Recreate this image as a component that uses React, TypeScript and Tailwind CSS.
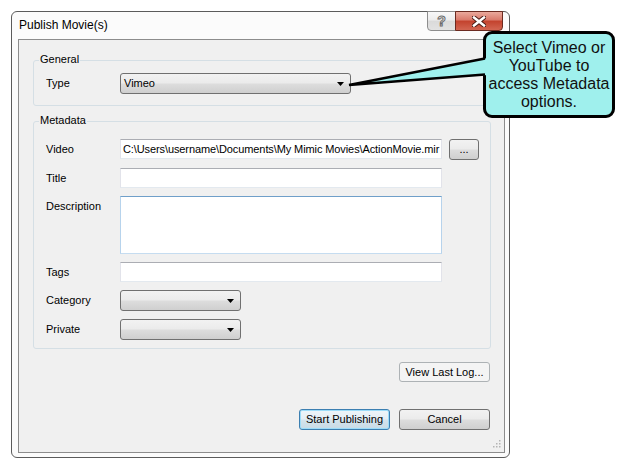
import React from 'react';

const font = { fontFamily: '"Liberation Sans", Arial, sans-serif' };

const textBox =
  'h-[20px] w-[322px] bg-white border border-t-[#abadb3] border-x-[#e2e3ea] border-b-[#e3e9ef]';

const winBtn =
  'flex items-center justify-center rounded-[3px] border text-[11px] text-black';

function Arrow() {
  return (
    <svg width="7" height="4" viewBox="0 0 7 4" className="shrink-0">
      <polygon points="0,0 7,0 3.5,4" fill="#000" />
    </svg>
  );
}

function Combo({ width, value }: { width: string; value?: string }) {
  return (
    <div
      className={`flex h-[21px] items-center rounded-[3px] border border-[#707070] bg-[linear-gradient(#f2f2f2,#ebebeb_48%,#dddddd_52%,#cfcfcf)] pl-[3px] pr-[6px] ${width}`}
    >
      <span className="text-[11px] leading-none text-black">{value}</span>
      <span className="ml-auto">
        <Arrow />
      </span>
    </div>
  );
}

function Row({ label, children }: { label: string; children: React.ReactNode }) {
  return (
    <div className="flex items-start">
      <div className="h-[20px] w-[86px] pl-[12px] text-[11px] leading-[20px] text-black">{label}</div>
      {children}
    </div>
  );
}

function Group({ title, className, children }: { title: string; className: string; children: React.ReactNode }) {
  return (
    <div className={`relative rounded-[3px] border border-[#d5dfe5] ${className}`}>
      <span className="absolute -top-[9px] left-[5px] bg-[#f0f0f0] px-[1px] text-[11px] leading-[14px] text-black">
        {title}
      </span>
      {children}
    </div>
  );
}

export default function App() {
  return (
    <div className="relative h-[470px] w-[626px] bg-white pl-[11px] pt-[11px]" style={font}>
      {/* dialog window */}
      <div className="flex h-[447px] w-[499px] flex-col rounded-[6px] border border-[#5b5b5b] bg-[#fbfbfb]">
        {/* title bar */}
        <div className="flex h-[27px] items-start">
          <span className="ml-[7px] mt-[6px] text-[12px] leading-[14px] text-black">Publish Movie(s)</span>
          <div className="-mt-px ml-auto mr-[6px] flex">
            <div className="flex h-[20px] w-[29px] items-center justify-center rounded-bl-[4px] border border-[#8d8d8d] bg-[linear-gradient(#f8f8f8,#ececec_45%,#dadada_50%,#e2e2e2)]">
              <span className="text-[14px] font-bold leading-none text-white [-webkit-text-stroke:1px_#6a6a6a]">?</span>
            </div>
            <div className="-ml-px flex h-[20px] w-[48px] items-center justify-center rounded-br-[4px] border border-[#6b2a20] bg-[linear-gradient(#eaa99c,#d9796a_45%,#c3422d_50%,#d26652)]">
              <svg width="14" height="11" viewBox="0 0 14 11">
                <path d="M2 1.5 L12 9.5 M12 1.5 L2 9.5" stroke="#4a1d16" strokeWidth="4.5" strokeLinecap="square" />
                <path d="M2 1.5 L12 9.5 M12 1.5 L2 9.5" stroke="#fff" strokeWidth="2.5" strokeLinecap="square" />
              </svg>
            </div>
          </div>
        </div>

        {/* client area */}
        <div className="relative mb-[4px] ml-[6px] mr-[4px] flex flex-1 flex-col border border-[#8c8c8c] bg-[#f0f0f0] pl-[14px] pr-[13px]">
          <Group title="General" className="mt-[20px] pb-[11px] pt-[12px]">
            <Row label="Type">
              <Combo width="w-[231px]" value="Vimeo" />
            </Row>
          </Group>

          <Group title="Metadata" className="mt-[15px] flex flex-col gap-[8px] pb-[8px] pt-[17px]">
            <Row label="Video">
              <div className={`${textBox} overflow-hidden whitespace-nowrap pl-[2px] text-[11px] leading-[18px] tracking-[-0.1px] text-black`}>
                C:\Users\username\Documents\My Mimic Movies\ActionMovie.mir
              </div>
              <div className={`${winBtn} ml-[7px] h-[21px] w-[30px] border-[#707070] bg-[linear-gradient(#f2f2f2,#ebebeb_48%,#dddddd_52%,#cfcfcf)] leading-none`}>
                ...
              </div>
            </Row>
            <Row label="Title">
              <div className={textBox} />
            </Row>
            <Row label="Description">
              <div className="h-[58px] w-[322px] border border-t-[#6f9fc9] border-x-[#b7d3ec] border-b-[#c5dcf0] bg-white" />
            </Row>
            <Row label="Tags">
              <div className={textBox} />
            </Row>
            <Row label="Category">
              <Combo width="w-[121px]" />
            </Row>
            <Row label="Private">
              <Combo width="w-[121px]" />
            </Row>
          </Group>

          <div className="mr-[1px] mt-[13px] flex justify-end">
            <div className={`${winBtn} h-[20px] w-[91px] border-[#adb2b5] bg-[#f4f4f4] text-[#9a9a9a]`}>View Last Log...</div>
          </div>
          <div className="mr-[1px] mt-[27px] flex justify-end gap-[9px]">
            <div className={`${winBtn} h-[21px] w-[91px] border-[#3c7fb1] bg-[linear-gradient(#eef5f9,#e4eef4_48%,#d4e3ec_52%,#c8dbe6)] shadow-[inset_0_0_0_1px_#9ddcf8]`}>
              Start Publishing
            </div>
            <div className={`${winBtn} h-[21px] w-[91px] border-[#707070] bg-[linear-gradient(#f2f2f2,#ebebeb_48%,#dddddd_52%,#cfcfcf)]`}>
              Cancel
            </div>
          </div>

          {/* size grip */}
          <svg width="8" height="8" viewBox="0 0 8 8" className="absolute bottom-[4px] right-[3px]">
            {[
              [6, 0],
              [6, 3],
              [3, 3],
              [6, 6],
              [3, 6],
              [0, 6],
            ].map(([x, y]) => (
              <rect key={`${x}-${y}`} x={x} y={y} width="1.5" height="1.5" fill="#b4b4b4" />
            ))}
          </svg>
        </div>
      </div>

      {/* callout annotation */}
      <div className="absolute left-[483px] top-[31px] flex h-[87px] w-[132px] items-center justify-center rounded-[9px] border-[3px] border-black bg-[#9ff0ed]">
        <p className="text-center text-[16px] leading-[18px] text-[#111]">
          Select Vimeo or
          <br />
          YouTube to
          <br />
          access Metadata
          <br />
          options.
        </p>
      </div>
      <svg className="pointer-events-none absolute left-0 top-0" width="626" height="470">
        <polygon points="349,85 488,58 488,75" fill="#9ff0ed" />
        <polyline points="485,58.5 349,85 485,74.5" fill="none" stroke="#000" strokeWidth="2.5" strokeLinejoin="miter" />
      </svg>
    </div>
  );
}
